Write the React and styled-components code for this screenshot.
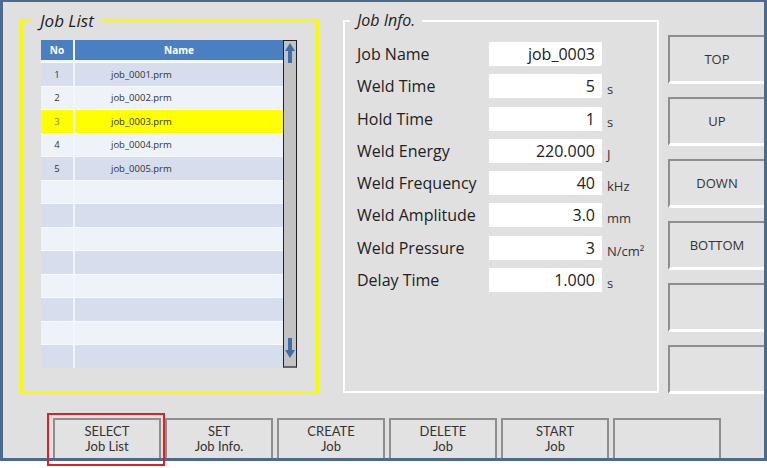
import React from 'react'
import styled, { createGlobalStyle } from 'styled-components'

const GlobalStyle = createGlobalStyle`
  html, body {
    margin: 0;
    background: #fff;
  }
  body {
    min-height: 468px;
    font-family: "Open Sans", "Liberation Sans", sans-serif;
    color: #222;
  }
`

const jobs = ['job_0001.prm', 'job_0002.prm', 'job_0003.prm', 'job_0004.prm', 'job_0005.prm']
const selectedIndex = 2
const TOTAL_ROWS = 13

const info = [
    { label: 'Job Name', value: 'job_0003', unit: '' },
    { label: 'Weld Time', value: '5', unit: 's' },
    { label: 'Hold Time', value: '1', unit: 's' },
    { label: 'Weld Energy', value: '220.000', unit: 'J' },
    { label: 'Weld Frequency', value: '40', unit: 'kHz' },
    { label: 'Weld Amplitude', value: '3.0', unit: 'mm' },
    { label: 'Weld Pressure', value: '3', unit: 'N/cm²' },
    { label: 'Delay Time', value: '1.000', unit: 's' },
]

const sideButtons = ['TOP', 'UP', 'DOWN', 'BOTTOM', '', '']

const footerButtons = [
    ['SELECT', 'Job List'],
    ['SET', 'Job Info.'],
    ['CREATE', 'Job'],
    ['DELETE', 'Job'],
    ['START', 'Job'],
    ['', ''],
]

const UpArrow = () => (
    <svg width="10" height="20" viewBox="0 0 10 20">
        <polygon points="5,0 10,8 7,8 7,20 3,20 3,8 0,8" fill="#3d6dab" />
    </svg>
)

const DownArrow = () => (
    <svg width="10" height="20" viewBox="0 0 10 20">
        <polygon points="3,0 7,0 7,12 10,12 5,20 0,12 3,12" fill="#3d6dab" />
    </svg>
)

const App = () => {
    const rows = Array.from({ length: TOTAL_ROWS }, (_, i) => jobs[i] || null)

    return (
        <>
            <GlobalStyle />
            <Frame>
                <Main>
                    <ListBox>
                        <ListLegend>Job List</ListLegend>
                        <ListArea>
                            <ListTable>
                                <HeaderRow>
                                    <NoCell>No</NoCell>
                                    <NameCell $head>Name</NameCell>
                                </HeaderRow>
                                {rows.map((name, i) => (
                                    <Row
                                        key={i}
                                        $tone={i === selectedIndex ? 'selected' : i % 2 === 0 ? 'odd' : 'even'}
                                    >
                                        <NoCell $selected={i === selectedIndex}>{name ? i + 1 : ''}</NoCell>
                                        <NameCell>{name || ''}</NameCell>
                                    </Row>
                                ))}
                            </ListTable>
                            <ScrollBar>
                                <UpArrow />
                                <DownArrow />
                            </ScrollBar>
                        </ListArea>
                    </ListBox>

                    <InfoBox>
                        <InfoLegend>Job Info.</InfoLegend>
                        <InfoGrid>
                            {info.map((item) => (
                                <React.Fragment key={item.label}>
                                    <Label>{item.label}</Label>
                                    <Value>{item.value}</Value>
                                    <Unit>{item.unit}</Unit>
                                </React.Fragment>
                            ))}
                        </InfoGrid>
                    </InfoBox>

                    <SideColumn>
                        {sideButtons.map((text, i) => (
                            <SideButton key={i}>{text}</SideButton>
                        ))}
                    </SideColumn>
                </Main>

                <Footer>
                    {footerButtons.map(([top, bottom], i) => (
                        <FooterButton key={i} $highlight={i === 0}>
                            <span>{top}</span>
                            <span>{bottom}</span>
                        </FooterButton>
                    ))}
                </Footer>
            </Frame>
        </>
    )
}

const Frame = styled.div`
    box-sizing: border-box;
    width: 767px;
    height: 461px;
    background: #e0e0e0;
    border: 3px solid #4d6a8c;
    border-top-width: 2px;
    padding: 9px 0 0 17px;
    display: flex;
    flex-direction: column;
`

const Main = styled.div`
    display: flex;
    align-items: flex-start;
`

const ListBox = styled.fieldset`
    box-sizing: border-box;
    width: 299px;
    height: 383px;
    margin: 0 24px 0 0;
    padding: 0;
    min-width: 0;
    border: 3px solid #fbfb00;
`

const ListLegend = styled.legend`
    margin-left: 9px;
    padding: 0 8px;
    font-style: italic;
    font-size: 17px;
    line-height: 19px;
    color: #1c1c1c;
`

const ListArea = styled.div`
    display: flex;
    height: 328px;
    margin: 10px 0 0 18px;
`

const ListTable = styled.div`
    width: 242px;
    display: flex;
    flex-direction: column;
    font-size: 9.5px;
    color: #333;
`

const HeaderRow = styled.div`
    display: grid;
    grid-template-columns: 34px 1fr;
    height: 22px;
    box-sizing: border-box;
    border-bottom: 2px solid #f4f6fb;
    background: #4a7fc1;
    color: #fff;
    font-weight: bold;
    font-size: 10px;
`

const rowColors = {
    odd: '#d6ddec',
    even: '#eef2f9',
    selected: '#ffff00',
}

const Row = styled.div`
    display: grid;
    grid-template-columns: 34px 1fr;
    height: 23.5px;
    box-sizing: border-box;
    border-top: 1px solid #f7f9fc;
    background: ${({ $tone }) => rowColors[$tone]};
`

const NoCell = styled.div`
    display: flex;
    align-items: center;
    justify-content: center;
    border-right: 2px solid #f2f5fa;
    color: ${({ $selected }) => ($selected ? '#8a8230' : 'inherit')};
`

const NameCell = styled.div`
    display: flex;
    align-items: center;
    justify-content: ${({ $head }) => ($head ? 'center' : 'flex-start')};
    padding-left: ${({ $head }) => ($head ? '0' : '36px')};
`

const ScrollBar = styled.div`
    box-sizing: border-box;
    width: 14px;
    border: 1px solid #222;
    border-bottom: 2px solid #666;
    background: #c3c3c3;
    display: flex;
    flex-direction: column;
    justify-content: space-between;
    align-items: center;
    padding: 2px 0 8px;
`

const InfoBox = styled.fieldset`
    box-sizing: border-box;
    width: 316px;
    height: 382px;
    margin: 0 9px 0 0;
    padding: 0;
    min-width: 0;
    border: 2px solid #fff;
`

const InfoLegend = styled.legend`
    margin-left: 5px;
    padding: 0 7px;
    font-style: italic;
    font-size: 16px;
    line-height: 19px;
    color: #222;
`

const InfoGrid = styled.div`
    display: grid;
    grid-template-columns: 132px 113px auto;
    grid-auto-rows: 24px;
    row-gap: 8.3px;
    align-items: center;
    margin: 12px 0 0 12px;
`

const Label = styled.div`
    font-size: 16px;
    line-height: 24px;
    color: #222;
    white-space: nowrap;
`

const Value = styled.div`
    height: 24px;
    background: #fff;
    text-align: right;
    padding-right: 7px;
    font-size: 16px;
    line-height: 24px;
    color: #222;
`

const Unit = styled.div`
    align-self: end;
    margin-left: 5px;
    padding-bottom: 1px;
    font-size: 13px;
    line-height: 16px;
    color: #333;
`

const SideColumn = styled.div`
    display: flex;
    flex-direction: column;
    gap: 13px;
    width: 96px;
    margin-top: 24px;
`

const SideButton = styled.div`
    box-sizing: border-box;
    height: 49px;
    border-top: 2px solid #8e8e8e;
    border-left: 2px solid #8e8e8e;
    border-bottom: 3px solid #fff;
    background: #e2e2e2;
    display: flex;
    align-items: center;
    justify-content: center;
    font-size: 13px;
    color: #333;
`

const Footer = styled.div`
    display: flex;
    gap: 4px;
    margin-top: 24px;
    padding-left: 33px;
`

const FooterButton = styled.div`
    position: relative;
    box-sizing: border-box;
    width: 108px;
    height: 40px;
    border: 2px solid #8e8e8e;
    border-bottom: 0;
    background: #e2e2e2;
    display: flex;
    flex-direction: column;
    align-items: center;
    justify-content: center;
    font-family: Lato, "Open Sans", sans-serif;
    font-size: 13px;
    line-height: 15px;
    color: #333;

    &::after {
        content: '';
        display: ${({ $highlight }) => ($highlight ? 'block' : 'none')};
        position: absolute;
        top: -7px;
        left: -8px;
        right: -6px;
        bottom: -8px;
        border: 2px solid #dd1f26;
    }
`

export default App
